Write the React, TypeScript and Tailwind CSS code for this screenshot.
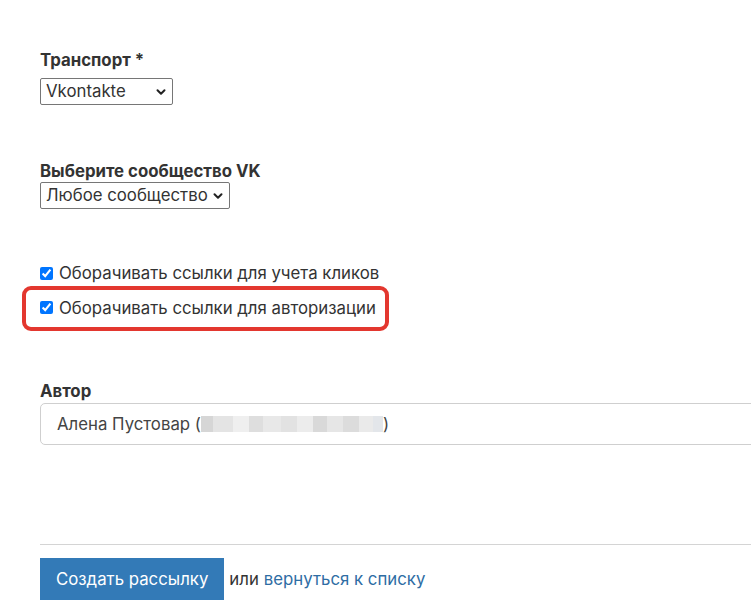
import React from "react";

function FakeSelect({ value, width }: { value: string; width: string }) {
    return (
        <div
            className={`flex h-[27px] items-center justify-between rounded-[2px] border border-[#767676] bg-white pl-[5px] pr-[6px] ${width}`}
        >
            <span className="leading-none">{value}</span>
            <svg className="h-[10px] w-[10px]" viewBox="0 0 10 10" fill="none">
                <path d="M1.5 3.2 5 6.7 8.5 3.2" stroke="#222" strokeWidth={2} strokeLinecap="round" strokeLinejoin="round" />
            </svg>
        </div>
    );
}

function CheckRow({ label }: { label: string }) {
    return (
        <label className="inline-flex items-center gap-[6px] leading-[20px]">
            <input type="checkbox" defaultChecked className="m-0 h-[13px] w-[13px] accent-[#0075ff]" />
            <span>{label}</span>
        </label>
    );
}

// pixelated email blur
const blurBlocks = [
    "bg-[#d6d6d6] w-[12px]",
    "bg-[#e4e4e4] w-[20px]",
    "bg-[#efefef] w-[16px]",
    "bg-[#dedede] w-[14px]",
    "bg-[#e8e8e8] w-[18px]",
    "bg-[#e2e2e2] w-[16px]",
    "bg-[#ececec] w-[16px]",
    "bg-[#d9d9d9] w-[14px]",
    "bg-[#e6e6e6] w-[16px]",
    "bg-[#dcdcdc] w-[16px]",
    "bg-[#eaeaea] w-[14px]",
    "bg-[#e3e6ea] w-[10px]",
];

export default function App() {
    return (
        <div className="h-[613px] w-[751px] overflow-hidden bg-white font-['Inter','Liberation_Sans',sans-serif] text-[16.8px] text-[#333]">
            <div className="w-[800px] pl-10 pt-[49px]">
                {/* Transport */}
                <div className="font-bold leading-[22px]">Транспорт *</div>
                <div className="mt-[7px]">
                    <FakeSelect value="Vkontakte" width="w-[133px]" />
                </div>

                {/* Community */}
                <div className="mt-[55px] font-bold leading-[22px]">Выберите сообщество VK</div>
                <div>
                    <FakeSelect value="Любое сообщество" width="w-[190px]" />
                </div>

                {/* Checkboxes */}
                <div className="mt-[54px] flex flex-col items-start gap-[13px]">
                    <CheckRow label="Оборачивать ссылки для учета кликов" />
                    <div className="relative">
                        <CheckRow label="Оборачивать ссылки для авторизации" />
                        <span className="pointer-events-none absolute -bottom-[10px] -left-[18px] -right-[13px] -top-[10px] rounded-[9px] border-[4px] border-[#e3372f]" />
                    </div>
                </div>

                {/* Author */}
                <div className="mt-[59px] font-bold leading-[22px]">Автор</div>
                <div className="mt-[1px] flex h-[42px] items-center rounded-[5px] border border-[#cfcfcf] bg-white pl-4 text-[#444]">
                    <span>Алена Пустовар (</span>
                    <span className="flex h-[16px]">
                        {blurBlocks.map((c, i) => (
                            <span key={i} className={`h-full ${c}`} />
                        ))}
                    </span>
                    <span>)</span>
                </div>

                <hr className="mt-[99px] border-t border-[#d4d4d4]" />

                <div className="mt-[13px] flex items-center">
                    <button className="h-[42px] bg-[#337ab7] px-4 text-white">Создать рассылку</button>
                    <span className="ml-[5px]">или</span>
                    <a className="ml-[5px] text-[#2e6da4]">вернуться к списку</a>
                </div>
            </div>
        </div>
    );
}
